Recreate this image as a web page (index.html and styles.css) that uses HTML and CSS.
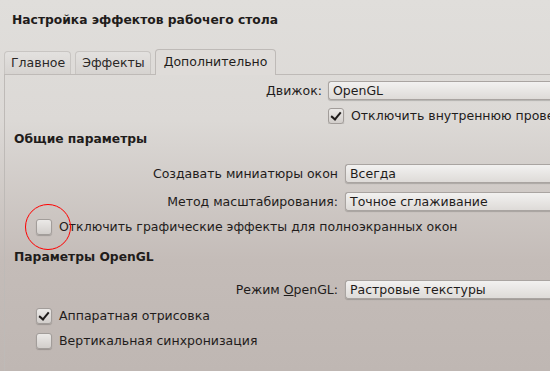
FILE: index.html
```html
<!DOCTYPE html>
<html lang="ru">
<head>
  <meta charset="UTF-8" />
  <title>Настройка эффектов рабочего стола</title>
  <link rel="stylesheet" href="styles.css">
</head>
<body>
<div class="window">
  <h1 class="title">Настройка эффектов рабочего стола</h1>

  <div class="tabs">
    <div class="tab">Главное</div>
    <div class="tab">Эффекты</div>
    <div class="tab active">Дополнительно</div>
  </div>

  <div class="panel">
    <div class="form engine">
      <label class="label">Движок:</label>
      <div class="combo">OpenGL</div>
      <span></span>
      <div class="check checked">Отключить внутреннюю проверку функциональности</div>
    </div>

    <h2 class="group">Общие параметры</h2>
    <div class="form">
      <label class="label">Создавать миниатюры окон</label>
      <div class="combo">Всегда</div>
      <label class="label">Метод масштабирования:</label>
      <div class="combo">Точное сглаживание</div>
    </div>
    <div class="check marked">Отключить графические эффекты для полноэкранных окон</div>

    <h2 class="group second">Параметры OpenGL</h2>
    <div class="form">
      <label class="label">Режим <u>O</u>penGL:</label>
      <div class="combo">Растровые текстуры</div>
    </div>
    <div class="check checked">Аппаратная отрисовка</div>
    <div class="check">Вертикальная синхронизация</div>
  </div>
</div>
</body>
</html>
```

FILE: styles.css
```css
body {
  margin: 0;
  width: 550px;
  height: 371px;
  overflow: hidden;
  font-family: 'DejaVu Sans', Verdana, sans-serif;
  font-size: 12.5px;
  color: #1f1c1b;
  background: linear-gradient(#e0dedb 0px, #dcd9d6 120px, #c4bcb8 260px, #bfb7b3 371px);
}

.window {
  padding-top: 12px;
}

.title {
  margin: 0 0 0 12px;
  font-size: 12.3px;
  font-weight: bold;
  line-height: 16px;
  height: 37px;
}

.tabs {
  display: flex;
  gap: 4px;
  padding-left: 4px;
  align-items: flex-end;
  position: relative;
  z-index: 1;
}

.tab {
  padding: 3px 5px 4px 6px;
  border: 1px solid #c8c5c2;
  border-bottom: none;
  border-radius: 4px 4px 0 0;
  background: linear-gradient(#e3e1df, #d6d3d0);
  color: #2a2726;
  line-height: 15px;
}

.tab.active {
  padding: 4px 8px 6px 8px;
  margin-bottom: -1px;
  background: #dfdcd9;
  border-color: #bebab7;
  color: #1f1c1b;
}

.panel {
  margin-left: 4px;
  border-top: 1px solid #bebab7;
  border-left: 1px solid #bebab7;
  padding: 6px 0 0 9px;
  height: 300px;
}

.form {
  display: grid;
  grid-template-columns: 324px 1fr;
  column-gap: 7px;
  row-gap: 9px;
  align-items: center;
}

.form.engine {
  grid-template-columns: 308px 1fr;
  column-gap: 6px;
  row-gap: 8px;
}

.label {
  text-align: right;
  white-space: nowrap;
}

.combo {
  height: 17px;
  line-height: 17px;
  padding-left: 4px;
  margin-right: -20px;
  border: 1px solid #a9a4a1;
  border-right: none;
  border-radius: 3px 0 0 3px;
  background: linear-gradient(#f2f1f0, #dedbd8);
  box-shadow: 0 1px 1px rgba(0, 0, 0, 0.18);
  white-space: nowrap;
}

.group {
  margin: 7px 0 17px 0;
  font-size: 12.3px;
  font-weight: bold;
  line-height: 16px;
}

.group.second {
  margin: 14px 0 15px 0;
}

.check {
  display: flex;
  align-items: center;
  gap: 7px;
  white-space: nowrap;
  line-height: 16px;
  padding-left: 22px;
  margin-top: 9px;
  position: relative;
}

.check.marked {
  margin-top: 8px;
}

.form .check {
  padding-left: 0;
  margin-top: 0;
  overflow: hidden;
}

.check::before {
  content: "";
  flex: none;
  width: 14px;
  height: 14px;
  border: 1px solid #a29d9a;
  border-radius: 3px;
  background: linear-gradient(#ebe9e7, #d2cecb);
  box-shadow: 0 1px 1px rgba(0, 0, 0, 0.2);
}

.check.checked::after {
  content: "";
  position: absolute;
  left: 27px;
  top: 2px;
  width: 4px;
  height: 8px;
  border: solid #1f1c1b;
  border-width: 0 2px 2px 0;
  transform: rotate(40deg);
}

.form .check.checked::after {
  left: 5px;
}

.check.marked::after {
  content: "";
  position: absolute;
  left: 11px;
  top: -15px;
  width: 44px;
  height: 44px;
  border: 1px solid #ff0000;
  border-radius: 50%;
}
```
